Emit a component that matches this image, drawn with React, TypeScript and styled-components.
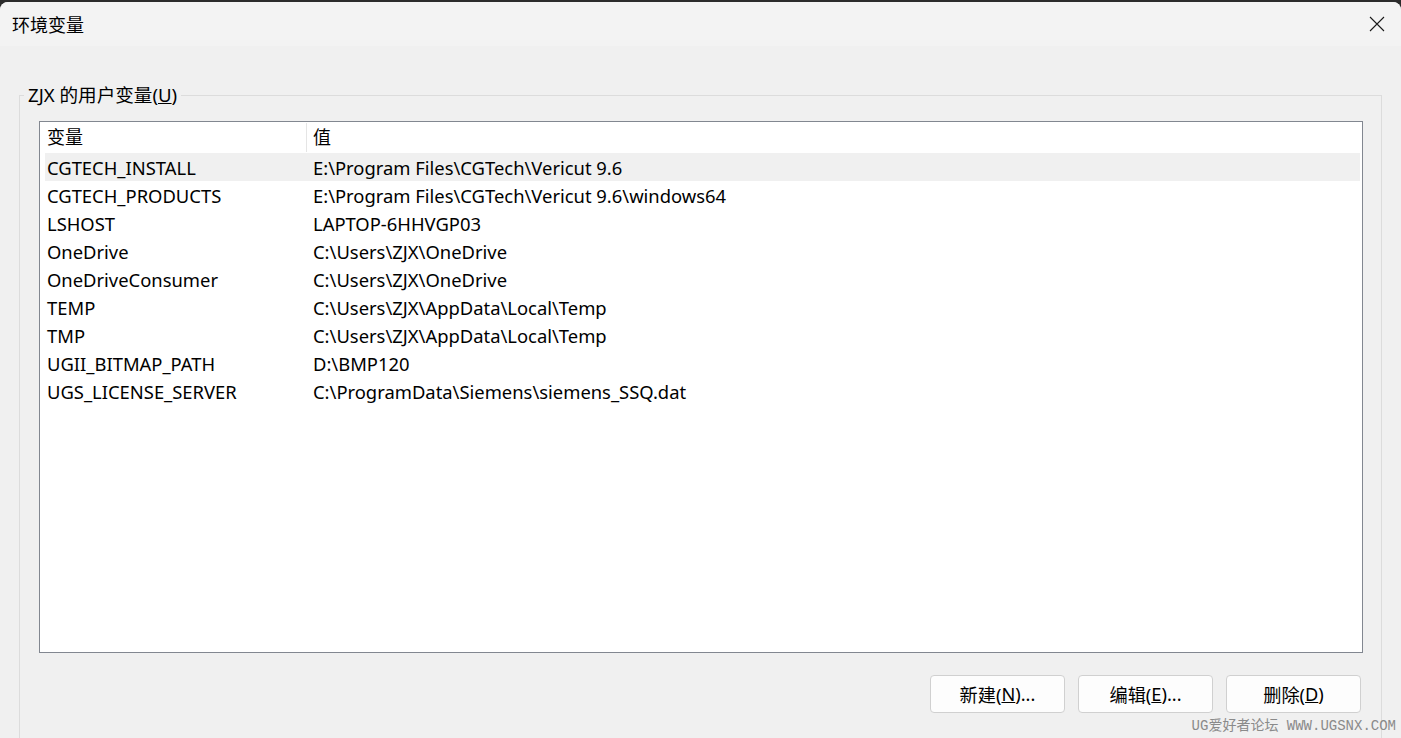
import React from "react";
import styled, { createGlobalStyle } from "styled-components";

const rows = [
  ["CGTECH_INSTALL", "E:\\Program Files\\CGTech\\Vericut 9.6"],
  ["CGTECH_PRODUCTS", "E:\\Program Files\\CGTech\\Vericut 9.6\\windows64"],
  ["LSHOST", "LAPTOP-6HHVGP03"],
  ["OneDrive", "C:\\Users\\ZJX\\OneDrive"],
  ["OneDriveConsumer", "C:\\Users\\ZJX\\OneDrive"],
  ["TEMP", "C:\\Users\\ZJX\\AppData\\Local\\Temp"],
  ["TMP", "C:\\Users\\ZJX\\AppData\\Local\\Temp"],
  ["UGII_BITMAP_PATH", "D:\\BMP120"],
  ["UGS_LICENSE_SERVER", "C:\\ProgramData\\Siemens\\siemens_SSQ.dat"],
];

function App() {
  return (
    <>
      <GlobalStyle />
      <Window>
        <TitleBar>
          <Title>环境变量</Title>
          <CloseButton aria-label="关闭">
            <svg width="16" height="16" viewBox="0 0 16 16">
              <path d="M1 1 L15 15 M15 1 L1 15" stroke="#1a1a1a" strokeWidth="1.1" fill="none" />
            </svg>
          </CloseButton>
        </TitleBar>
        <Body>
          <Group>
            <Legend>
              ZJX 的用户变量(<u>U</u>)
            </Legend>
            <ListBox>
              <HeaderRow>
                <HeaderCell $sep>变量</HeaderCell>
                <HeaderCell>值</HeaderCell>
              </HeaderRow>
              {rows.map(([name, value], i) => (
                <Row key={name} $hover={i === 0}>
                  <Cell>{name}</Cell>
                  <Cell>{value}</Cell>
                </Row>
              ))}
            </ListBox>
            <ButtonBar>
              <Button>
                新建(<u>N</u>)...
              </Button>
              <Button>
                编辑(<u>E</u>)...
              </Button>
              <Button>
                删除(<u>D</u>)
              </Button>
            </ButtonBar>
          </Group>
        </Body>
        <Watermark>UG爱好者论坛 WWW.UGSNX.COM</Watermark>
      </Window>
    </>
  );
}

const GlobalStyle = createGlobalStyle`
  body {
    margin: 0;
    background: #2b2b2b;
    font-family: "Noto Sans", "Noto Sans CJK SC", sans-serif;
    color: #000;
  }
`;

const Window = styled.div`
  position: relative;
  margin-top: 2px;
  height: 736px;
  background: #f0f0f0;
  border-radius: 8px 8px 0 0;
  overflow: hidden;
`;

const TitleBar = styled.div`
  height: 44px;
  display: flex;
  align-items: center;
  justify-content: space-between;
  padding-left: 12px;
  background: #f3f3f3;
`;

const Title = styled.div`
  font-size: 18px;
  font-family: "Noto Sans CJK SC", sans-serif;
`;

const CloseButton = styled.div`
  width: 48px;
  height: 44px;
  display: flex;
  align-items: center;
  justify-content: center;
`;

const Body = styled.div`
  padding: 37px 19px 0;
`;

const Group = styled.fieldset`
  margin: 0;
  padding: 0 18px 0 4px;
  border: 1px solid #dcdcdc;
  border-bottom: none;
  min-width: 0;
  height: 700px;
`;

const Legend = styled.legend`
  padding: 0 4px;
  font-size: 18.6px;
  line-height: 24px;
  color: #000;
`;

const ListBox = styled.div`
  margin: 14px 0 0 15px;
  height: 530px;
  border: 1px solid #828790;
  background: #fff;
  padding: 0 2px 0 5px;
`;

const HeaderRow = styled.div`
  display: grid;
  grid-template-columns: 266px 1fr;
  height: 30px;
  align-items: center;
  margin-bottom: 1px;
`;

const HeaderCell = styled.div<{ $sep?: boolean }>`
  position: relative;
  padding-left: 2px;
  font-size: 18px;
  height: 30px;
  line-height: 30px;
  &::after {
    content: "";
    display: ${(p) => (p.$sep ? "block" : "none")};
    position: absolute;
    right: 4px;
    top: 1px;
    bottom: 0;
    width: 1px;
    background: #e5e5e5;
  }
`;

const Row = styled.div<{ $hover?: boolean }>`
  display: grid;
  grid-template-columns: 266px 1fr;
  height: 28px;
  align-items: center;
  background: ${(p) => (p.$hover ? "#f0f0f0" : "transparent")};
`;

const Cell = styled.div`
  padding-left: 2px;
  font-size: 18.4px;
  white-space: nowrap;
`;

const ButtonBar = styled.div`
  display: flex;
  justify-content: flex-end;
  gap: 13px;
  margin-top: 22px;
  padding-right: 2px;
`;

const Button = styled.div`
  width: 135px;
  height: 38px;
  box-sizing: border-box;
  border: 1px solid #d0d0d0;
  border-radius: 4px;
  background: #fdfdfd;
  display: flex;
  align-items: center;
  justify-content: center;
  font-size: 18.2px;
`;

const Watermark = styled.div`
  position: absolute;
  right: 5px;
  bottom: 4px;
  font-family: "Liberation Mono", "Noto Sans CJK SC", monospace;
  font-size: 14px;
  color: #8a8a8a;
`;

export default App;
